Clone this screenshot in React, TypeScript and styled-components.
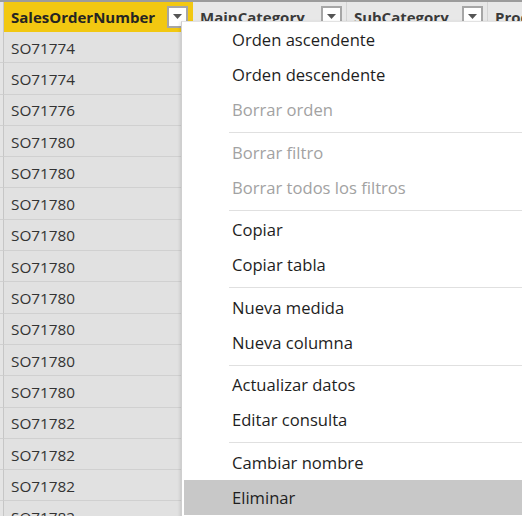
import React from "react";
import styled, { createGlobalStyle } from "styled-components";

const Global = createGlobalStyle`
  html, body { margin: 0; padding: 0; background: #ffffff; overflow: hidden; }
  body { font-family: "Open Sans", "Noto Sans", sans-serif; }
`;

const Page = styled.div`
  position: relative;
  width: 522px;
  height: 516px;
  overflow: hidden;
  background: #ffffff;
  display: flex;
  flex-direction: column;
`;

const TopStrip = styled.div`
  height: 2px;
  background: #9c9c9c;
  flex: none;
`;

const Table = styled.div`
  display: grid;
  grid-template-columns: 4px 189px 154px 141px 200px;
  grid-auto-rows: auto;
`;

const HeaderGutter = styled.div`
  height: 30px;
  background: #e4e4e4;
  border-right: 1px solid #c6c6c6;
  box-sizing: border-box;
`;

const HeaderCell = styled.div<{ $active?: boolean }>`
  height: 30px;
  box-sizing: border-box;
  background: ${(p) => (p.$active ? "#f2c811" : "#e8e8e8")};
  border-right: 1px solid ${(p) => (p.$active ? "#f2c811" : "#d4d4d4")};
  display: flex;
  align-items: center;
  padding: 0 4px 0 7px;
  gap: 6px;
  font-family: "Open Sans", "Noto Sans", sans-serif;
  font-weight: 700;
  font-size: 15px;
  color: ${(p) => (p.$active ? "#252423" : "#3a3a3a")};
  white-space: nowrap;
  overflow: hidden;
`;

const HeaderLabel = styled.span`
  flex: 1;
  overflow: hidden;
`;

const DropButton = styled.span`
  flex: none;
  width: 21px;
  height: 22px;
  box-sizing: border-box;
  background: #ffffff;
  border: 2px solid #a6a6a6;
  display: flex;
  justify-content: center;
  padding-top: 6px;
`;

const Gutter = styled.div`
  height: 31.3px;
  box-sizing: border-box;
  background: #e4e4e4;
  border-right: 1px solid #c6c6c6;
  border-bottom: 1px solid #d0d0d0;
`;

const Cell = styled.div`
  height: 31.3px;
  box-sizing: border-box;
  background: #e1e1e1;
  border-bottom: 1px solid #d0d0d0;
  border-right: 1px solid #d0d0d0;
  display: flex;
  align-items: center;
  padding: 1px 0 0 7px;
  font-family: "Open Sans", "Noto Sans", sans-serif;
  font-size: 15.3px;
  color: #333333;
  white-space: nowrap;
`;

const Menu = styled.div`
  position: absolute;
  left: 181px;
  top: 21px;
  width: 360px;
  padding: 0 0 20px 2px;
  background: #ffffff;
  border-left: 1px solid #cfcfcf;
  border-top: 1px solid #e2e2e2;
  box-shadow: -1px 1px 3px rgba(0, 0, 0, 0.12);
  display: flex;
  flex-direction: column;
`;

const MenuItem = styled.div<{ $disabled?: boolean; $hover?: boolean }>`
  height: 35px;
  display: flex;
  align-items: center;
  padding-left: 48px;
  font-family: "Open Sans", "Noto Sans", sans-serif;
  font-size: 16.6px;
  color: ${(p) => (p.$disabled ? "#a2a2a2" : "#1e1e1e")};
  background: ${(p) => (p.$hover ? "#c8c8c8" : "transparent")};
  white-space: nowrap;
`;

const Separator = styled.div`
  height: 1px;
  margin: 5px 0 1.5px 45px;
  background: #e0e0e0;
`;

const Caret = () => (
  <svg width="9" height="5" viewBox="0 0 9 5">
    <path d="M0 0 H9 L4.5 5 Z" fill="#555" />
  </svg>
);

const rows = [
  "SO71774",
  "SO71774",
  "SO71776",
  "SO71780",
  "SO71780",
  "SO71780",
  "SO71780",
  "SO71780",
  "SO71780",
  "SO71780",
  "SO71780",
  "SO71780",
  "SO71782",
  "SO71782",
  "SO71782",
  "SO71782",
];

type Entry = { label?: string; disabled?: boolean; hover?: boolean; sep?: boolean };

const menu: Entry[] = [
  { label: "Orden ascendente" },
  { label: "Orden descendente" },
  { label: "Borrar orden", disabled: true },
  { sep: true },
  { label: "Borrar filtro", disabled: true },
  { label: "Borrar todos los filtros", disabled: true },
  { sep: true },
  { label: "Copiar" },
  { label: "Copiar tabla" },
  { sep: true },
  { label: "Nueva medida" },
  { label: "Nueva columna" },
  { sep: true },
  { label: "Actualizar datos" },
  { label: "Editar consulta" },
  { sep: true },
  { label: "Cambiar nombre" },
  { label: "Eliminar", hover: true },
];

export default function App() {
  return (
    <Page>
      <Global />
      <TopStrip />
      <Table>
        <HeaderGutter />
        <HeaderCell $active>
          <HeaderLabel>SalesOrderNumber</HeaderLabel>
          <DropButton><Caret /></DropButton>
        </HeaderCell>
        <HeaderCell>
          <HeaderLabel>MainCategory</HeaderLabel>
          <DropButton><Caret /></DropButton>
        </HeaderCell>
        <HeaderCell>
          <HeaderLabel>SubCategory</HeaderLabel>
          <DropButton><Caret /></DropButton>
        </HeaderCell>
        <HeaderCell>
          <HeaderLabel>ProductName</HeaderLabel>
        </HeaderCell>
        {rows.map((r, i) => (
          <React.Fragment key={i}>
            <Gutter />
            <Cell>{r}</Cell>
            <Cell />
            <Cell />
            <Cell />
          </React.Fragment>
        ))}
      </Table>
      <Menu>
        {menu.map((m, i) =>
          m.sep ? (
            <Separator key={i} />
          ) : (
            <MenuItem key={i} $disabled={m.disabled} $hover={m.hover}>
              {m.label}
            </MenuItem>
          )
        )}
      </Menu>
    </Page>
  );
}
